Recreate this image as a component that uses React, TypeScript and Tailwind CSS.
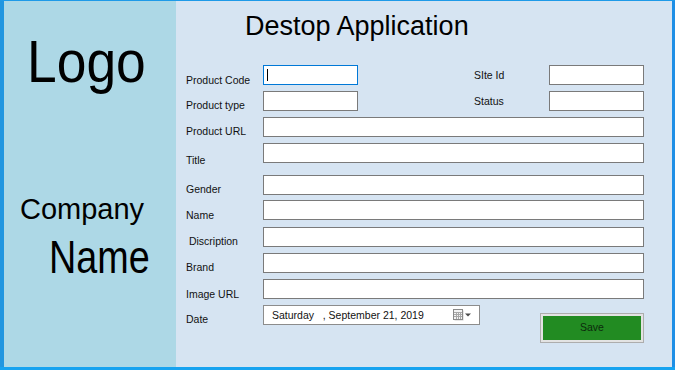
import React from "react"

const font = "font-['Liberation_Sans',Arial,sans-serif]"

function Box({ focused = false, className = "" }: { focused?: boolean; className?: string }) {
  return (
    <div
      className={`h-[20px] bg-white border ${focused ? "border-[#0078d7]" : "border-[#7a7a7a]"} ${className}`}
    >
      {focused && <div className="ml-[3px] mt-[3px] h-[12px] w-px bg-black" />}
    </div>
  )
}

// pad pushes the baseline down like the WinForms labels
function Label({ text, pad, className = "" }: { text: string; pad: string; className?: string }) {
  return (
    <div className={`${pad} h-[20px] text-[10.5px] leading-[13px] text-[#111] whitespace-pre ${className}`}>{text}</div>
  )
}

function Row({ label, mt, pad }: { label: string; mt: string; pad: string }) {
  return (
    <div className={`flex items-start h-[20px] ${mt}`}>
      <Label text={label} pad={pad} className="w-[77px]" />
      <Box className="flex-1" />
    </div>
  )
}

function CalendarIcon() {
  return (
    <svg width="20" height="13" viewBox="0 0 20 13">
      <rect x="1.5" y="1.5" width="9" height="10" fill="#cfcfcf" />
      <rect x="0.5" y="0.5" width="9" height="10" fill="#f4f4f4" stroke="#8a8a8a" />
      <g stroke="#a8a8a8" strokeWidth="1">
        <line x1="1" y1="3.5" x2="9" y2="3.5" />
        <line x1="1" y1="5.5" x2="9" y2="5.5" />
        <line x1="1" y1="7.5" x2="9" y2="7.5" />
        <line x1="3.5" y1="3" x2="3.5" y2="10" />
        <line x1="5.5" y1="3" x2="5.5" y2="10" />
        <line x1="7.5" y1="3" x2="7.5" y2="10" />
      </g>
      <path d="M12 4.5 L18 4.5 L15 7.5 Z" fill="#4a4a4a" />
    </svg>
  )
}

export default function App() {
  return (
    <div className={`w-[675px] h-[370px] flex flex-col overflow-hidden ${font}`}>
      <div className="h-px bg-[#1e9ae8]" />
      <div className="flex h-[366px]">
        <div className="w-[4px] bg-[#2196e0]" />

        {/* logo side */}
        <div className="w-[172px] bg-[#add8e6] flex flex-col text-black">
          <div className="mt-[31px] pl-[23px] h-[60px] text-[60px] leading-[60px]">
            <span className="inline-block origin-left scale-x-[0.89]">Logo</span>
          </div>
          <div className="mt-[103px] pl-[16px] h-[29px] text-[29px] leading-[29px]">Company</div>
          <div className="mt-[10px] pl-[45px] h-[46px] text-[46px] leading-[46px]">
            <span className="inline-block origin-left scale-x-[0.82]">Name</span>
          </div>
        </div>

        {/* form side */}
        <div className="flex-1 bg-[#d6e4f2] flex flex-col pl-[10px] pr-[28px]">
          <div className="mt-[10px] pl-[59px] h-[31px] text-[27px] leading-[31px] text-black">Destop Application</div>

          <div className="flex items-start h-[20px] mt-[23px]">
            <Label text="Product Code" pad="pt-[9px]" className="w-[77px]" />
            <Box focused className="w-[95px]" />
            <Label text="SIte Id" pad="pt-[4px]" className="ml-[116px] w-[75px]" />
            <Box className="w-[95px]" />
          </div>
          <div className="flex items-start h-[20px] mt-[6px]">
            <Label text="Product type" pad="pt-[8px]" className="w-[77px]" />
            <Box className="w-[95px]" />
            <Label text="Status" pad="pt-[4px]" className="ml-[116px] w-[75px]" />
            <Box className="w-[95px]" />
          </div>
          <Row label="Product URL" mt="mt-[6px]" pad="pt-[8px]" />
          <Row label="Title" mt="mt-[6px]" pad="pt-[11px]" />
          <Row label="Gender" mt="mt-[12px]" pad="pt-[8px]" />
          <Row label="Name" mt="mt-[5px]" pad="pt-[9px]" />
          <Row label=" Discription" mt="mt-[7px]" pad="pt-[8px]" />
          <Row label="Brand" mt="mt-[6px]" pad="pt-[8px]" />
          <Row label="Image URL" mt="mt-[6px]" pad="pt-[9px]" />

          <div className="flex items-start mt-[6px]">
            <Label text="Date" pad="pt-[8px]" className="w-[77px]" />
            <div className="w-[217px] h-[20px] bg-white border border-[#8c8c8c] flex items-center pl-[8px] pr-[6px]">
              <span className="text-[10.5px] leading-[13px] text-[#111] whitespace-pre">Saturday   , September 21, 2019</span>
              <span className="ml-auto flex items-center">
                <CalendarIcon />
              </span>
            </div>
            <div className="ml-auto mt-[8px] w-[104px] h-[30px] border border-[#adadad] bg-[#e3e3e3] p-[2px]">
              <div className="h-full bg-[#228b22] flex items-center justify-center text-[10.5px] text-[#0c2a0c]">
                Save
              </div>
            </div>
          </div>
        </div>

        <div className="w-[3px] bg-[#1e8fe6]" />
      </div>
      <div className="h-[3px] bg-[#17a3f0]" />
    </div>
  )
}
